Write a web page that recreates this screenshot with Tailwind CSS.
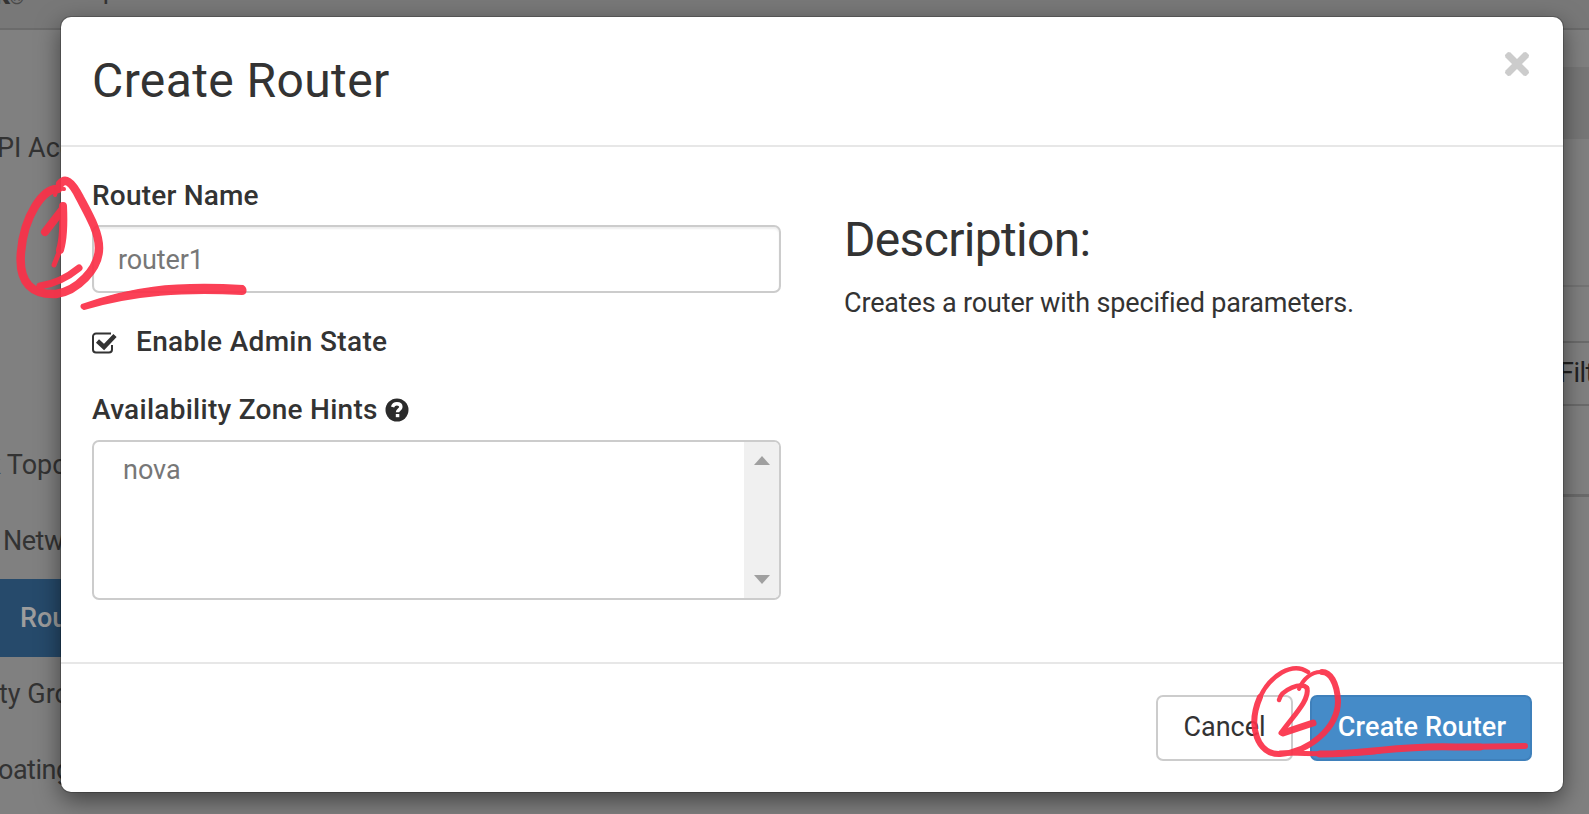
<!DOCTYPE html>
<html lang="en">
<head>
<meta charset="utf-8">
<title>Create Router</title>
<script src="https://cdn.jsdelivr.net/npm/@tailwindcss/browser@4"></script>
</head>
<body class="relative h-[814px] w-[1589px] overflow-hidden bg-[#808080] font-['Roboto','Liberation_Sans',sans-serif] text-[28px] text-[#333]">
<!-- dimmed page -->
<div class="flex h-[30px] items-end border-b-2 border-[#6b6b6b] bg-[#787878]"></div>
<div class="flex h-[784px] justify-between">
  <nav class="flex w-[80px] flex-col overflow-hidden whitespace-nowrap pt-[80px] text-[27px] leading-[76px] tracking-[-0.5px]">
    <div class="h-[76px] -ml-[3px] tracking-normal">PI Access</div>
    <div class="mt-[241px] h-[76px] -ml-[13px] tracking-normal">k Topology</div>
    <div class="h-[76px] pl-[3px] leading-[77px]">Networks</div>
    <div class="h-[78px] bg-[#264a6b] pl-[20px] leading-[78px] font-medium tracking-normal text-[#9d9d9d]">Routers</div>
    <div class="h-[76px] -ml-px leading-[74px] tracking-normal">ty Groups</div>
    <div class="h-[76px] -ml-[2px] leading-[74px]">oating IPs</div>
  </nav>
  <div class="flex w-[27px] flex-col overflow-hidden whitespace-nowrap">
    <div class="mt-[37px] h-[72px] bg-[#777]"></div>
    <div class="mt-[146px] h-[56px] border-t-2 border-[#747474]"></div>
    <div class="h-[65px] border-y-2 border-[#6b6b6b] text-[27px] leading-[61px] tracking-[-0.5px] text-[#222]"><span class="-ml-[3px]">Filter</span></div>
    <div class="mt-[88px] border-t-3 border-[#6b6b6b]"></div>
  </div>
</div>
<div class="absolute -left-[6px] -top-[22px] flex items-end text-[30px] leading-[32px] font-bold">k<span class="-ml-px text-[20px] leading-[26px] text-[#4a4a4a]">®</span></div>
<div class="absolute -top-[27px] left-[74px] text-[27px] leading-[32px]">Exp</div>

<!-- dialog -->
<section class="absolute left-[61px] top-[17px] flex h-[775px] w-[1502px] flex-col rounded-[10px] bg-white shadow-[0_8px_24px_rgba(0,0,0,0.5),0_0_0_1px_rgba(0,0,0,0.2)]">
  <header class="flex h-[130px] items-start justify-between border-b-2 border-[#e7e7e7] pl-[31px] pr-[31px]">
    <h1 class="mt-[36px] text-[48px] leading-[56px] tracking-[0.4px]">Create Router</h1>
    <svg class="mt-[32px] size-[30px]" viewBox="0 0 30 30"><path d="M5.500 5.500 24.500 24.500M24.500 5.500 5.500 24.500" stroke="#ccc" stroke-width="7"/><path d="M4.500 6.500 6.500 4.500M23.500 4.500l2 2M25.500 23.500l-2 2M6.500 25.500l-2-2" stroke="#ccc" stroke-width="3" stroke-linecap="round"/></svg>
  </header>
  <div class="flex h-[515px] pl-[31px]">
    <div class="w-[689px]">
      <label class="mt-[31px] block h-[36px] font-medium leading-[36px] tracking-[0.2px]">Router Name</label>
      <div class="mt-[11px] h-[68px] rounded-[7px] border-2 border-[#ccc] pl-[24px] text-[27px] leading-[66px] tracking-[-0.1px] text-[#777] shadow-[inset_0_2px_2px_rgba(0,0,0,0.07)]">router1</div>
      <div class="mt-[31px] flex h-[36px] items-center leading-[36px]">
        <svg class="mt-[2px] h-[24px] w-[26px]" viewBox="0 0 26 24"><path d="M20 14v4.500a3 3 0 0 1-3 3H4a3 3 0 0 1-3-3V5.500a3 3 0 0 1 3-3h15" fill="none" stroke="#333" stroke-width="2"/><path d="M5.500 10 12 16 23 4.500" fill="none" stroke="#333" stroke-width="4.500"/></svg>
        <span class="ml-[18px] font-medium tracking-[0.33px]">Enable Admin State</span>
      </div>
      <div class="mt-[32px] flex h-[36px] items-center leading-[36px]">
        <span class="font-medium tracking-[0.27px]">Availability Zone Hints</span>
        <svg class="ml-[7px] size-[24px]" viewBox="0 0 24 24"><circle cx="12" cy="12" r="11.500" fill="#2b2b2b"/><path d="M7.500 9c.8-2.200 2.300-3.200 4.400-3.200 2.400 0 4 1.200 4 3.200 0 2.700-3.400 2.700-3.400 5.300" fill="none" stroke="#fff" stroke-width="3.400"/><path d="M10.800 16h3.500v3.200h-3.500z" fill="#fff"/></svg>
      </div>
      <div class="mt-[12px] flex h-[160px] justify-between overflow-hidden rounded-[7px] border-2 border-[#ccc] text-[27px] text-[#777]">
        <span class="pl-[29px] pt-[10px] leading-[36px]">nova</span>
        <div class="flex w-[35px] flex-col items-center justify-between bg-[#f0f0f0] pb-[14px] pt-[14px]">
          <svg class="h-[9px] w-[16px]" viewBox="0 0 16 9"><path d="M0 9 8 0l8 9z" fill="#a0a0a0"/></svg>
          <svg class="h-[9px] w-[16px]" viewBox="0 0 16 9"><path d="M0 0h16L8 9z" fill="#a0a0a0"/></svg>
        </div>
      </div>
    </div>
    <div class="ml-[63px]">
      <h2 class="mt-[65px] text-[48px] leading-[56px] tracking-[-0.68px]">Description:</h2>
      <p class="mt-[17px] text-[27px] leading-[36px] tracking-[-0.16px]">Creates a router with specified parameters.</p>
    </div>
  </div>
  <footer class="flex grow items-start justify-end gap-[17px] border-t-2 border-[#e7e7e7] pr-[31px] pt-[31px]">
    <button class="h-[66px] w-[137px] rounded-[7px] border-2 border-[#ccc] pb-[2px] text-[27px]">Cancel</button>
    <button class="h-[66px] w-[222px] rounded-[7px] border-2 border-[#3f80bb] bg-[#458bc8] pb-[2px] pl-[2px] text-[27px] font-medium tracking-[0.15px] text-white">Create Router</button>
  </footer>
</section>

<!-- handwritten marks -->
<svg class="absolute inset-0 h-[814px] w-[1589px]" viewBox="0 0 1589 814" fill="none" stroke="#fb3048" stroke-linecap="round" stroke-linejoin="round">
  <g opacity=".92">
    <path stroke-width="8.500" d="M58 189C43 188 24 216 21 252C18 284 33 295 56 294C77 291 99 269 99 248C99 232 89 215 80 198C71 180 65 178 60 184"/>
    <path stroke-width="4" d="M64 189C59 188 56 190 55 195"/>
    <path stroke-width="8" d="M45 232 62 210"/>
    <path stroke-width="8" d="M63 206C64 227 63 240 60 250"/>
    <path stroke-width="5" d="M60 250 54 265"/>
    <path stroke-width="7" d="M40 286C54 284 68 277 79 268"/>
    <path fill="#fb3048" stroke-width="2" d="M82 305C128 288 172 282 243 286C247 289 246 294 242 294C184 291 135 294 84 309C81 308 81 306 82 305Z"/>
    <path stroke-width="4.500" d="M1308 672C1292 661 1270 676 1260 697"/>
    <path stroke-width="6" d="M1260 697C1247 727 1258 755 1280 754C1309 752 1338 728 1338 701"/>
    <path stroke-width="6" d="M1338 701C1337 682 1330 672 1322 672"/>
    <path stroke-width="4" d="M1322 672C1312 671 1303 679 1299 689"/>
    <path stroke-width="4.500" d="M1279 700C1281 690 1302 681 1307 688"/>
    <path stroke-width="5" d="M1307 688C1310 700 1293 716 1281 733L1296 729"/>
    <path stroke-width="7" d="M1283 733 1313 723"/>
    <path stroke-width="5" d="M1280 753C1310 753 1350 756 1380 751"/>
    <path stroke-width="7" d="M1320 754C1370 754 1400 745 1455 747L1480 747"/>
    <path stroke-width="6" d="M1460 747 1525 746"/>
  </g>
</svg>
</body>
</html>
